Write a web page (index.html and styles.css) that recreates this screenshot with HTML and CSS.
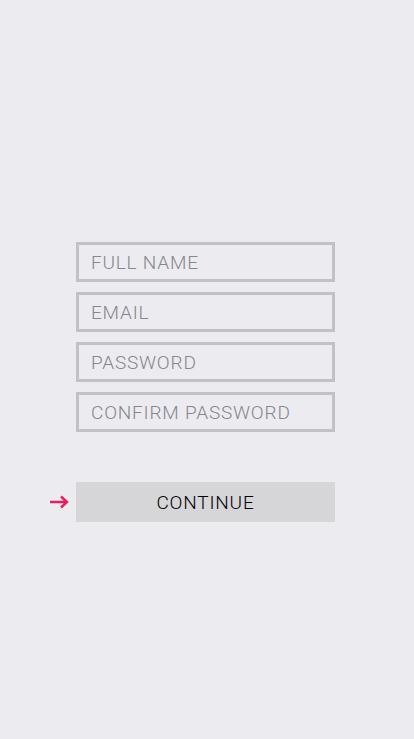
FILE: index.html
```html
<!DOCTYPE html>
<html lang="en">
<head>
  <meta charset="UTF-8" />
  <meta name="viewport" content="width=device-width, initial-scale=1.0" />
  <title>Sign Up</title>
  <link rel="stylesheet" href="styles.css">
</head>
<body>
  <form class="signup">
    <input class="field" type="text" placeholder="FULL NAME" />
    <input class="field" type="email" placeholder="EMAIL" />
    <input class="field" type="password" placeholder="PASSWORD" />
    <input class="field" type="password" placeholder="CONFIRM PASSWORD" />

    <div class="continue-row">
      <svg class="arrow" width="20" height="14" viewBox="0 0 20 14">
        <path d="M1 7 H18 M12 1.5 L18 7 L12 12.5" fill="none" stroke="#ec1c5c" stroke-width="2.4" />
      </svg>
      <button class="continue" type="button">CONTINUE</button>
    </div>
  </form>
</body>
</html>
```

FILE: styles.css
```css
body {
  font-family: Roboto, "Liberation Sans", sans-serif;
  margin: 0;
  background: #ececf0;
  color: #333;
  height: 739px;
}
.signup {
  display: flex;
  flex-direction: column;
  gap: 10px;
  padding-top: 242px;
  padding-left: 76px;
  width: 259px;
}
.field {
  box-sizing: border-box;
  width: 259px;
  height: 40px;
  border: 3px solid #c2c2c6;
  background: transparent;
  padding: 1px 12px 0;
  font-family: inherit;
  font-size: 19px;
  font-weight: 300;
  letter-spacing: 0.8px;
  color: #555;
  outline: none;
}
.field::placeholder {
  color: #86868b;
}
.continue-row {
  display: flex;
  align-items: center;
  gap: 7px;
  margin-top: 40px;
  margin-left: -27px;
}
.arrow {
  display: block;
}
.continue {
  width: 259px;
  height: 40px;
  border: 0;
  background: #d6d6d9;
  font-family: inherit;
  font-size: 19px;
  font-weight: 300;
  letter-spacing: 0.8px;
  color: #000;
  padding: 1px 0 0;
}
```
